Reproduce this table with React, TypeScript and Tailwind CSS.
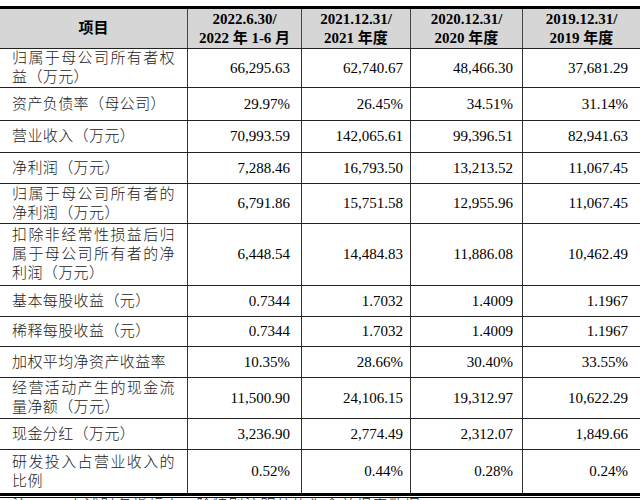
const cols = "grid grid-cols-[188px_114px_109px_112px_117px]";

type Row = { label: string; h: string; v: string[] };

const rows: Row[] = [
  { label: "归属于母公司所有者权益（万元）", h: "h-[39px]", v: ["66,295.63", "62,740.67", "48,466.30", "37,681.29"] },
  { label: "资产负债率（母公司）", h: "h-[33px]", v: ["29.97%", "26.45%", "34.51%", "31.14%"] },
  { label: "营业收入（万元）", h: "h-[32px]", v: ["70,993.59", "142,065.61", "99,396.51", "82,941.63"] },
  { label: "净利润（万元）", h: "h-[31px]", v: ["7,288.46", "16,793.50", "13,213.52", "11,067.45"] },
  { label: "归属于母公司所有者的净利润（万元）", h: "h-[40px]", v: ["6,791.86", "15,751.58", "12,955.96", "11,067.45"] },
  { label: "扣除非经常性损益后归属于母公司所有者的净利润（万元）", h: "h-[62px]", v: ["6,448.54", "14,484.83", "11,886.08", "10,462.49"] },
  { label: "基本每股收益（元）", h: "h-[31px]", v: ["0.7344", "1.7032", "1.4009", "1.1967"] },
  { label: "稀释每股收益（元）", h: "h-[30px]", v: ["0.7344", "1.7032", "1.4009", "1.1967"] },
  { label: "加权平均净资产收益率", h: "h-[31px]", v: ["10.35%", "28.66%", "30.40%", "33.55%"] },
  { label: "经营活动产生的现金流量净额（万元）", h: "h-[41px]", v: ["11,500.90", "24,106.15", "19,312.97", "10,622.29"] },
  { label: "现金分红（万元）", h: "h-[31px]", v: ["3,236.90", "2,774.49", "2,312.07", "1,849.66"] },
  { label: "研发投入占营业收入的比例", h: "h-[43px]", v: ["0.52%", "0.44%", "0.28%", "0.24%"] },
];

const pads = ["pr-[11px]", "pr-[7px]", "pr-[9px]", "pr-[12px]"];

const heads = [
  ["2022.6.30/", "2022 年 1-6 月"],
  ["2021.12.31/", "2021 年度"],
  ["2020.12.31/", "2020 年度"],
  ["2019.12.31/", "2019 年度"],
];

export default function App() {
  return (
    <div className="w-[640px] bg-white pt-[6px] font-['Liberation_Serif','Noto_Sans_CJK_SC',serif] text-[15px] text-black overflow-hidden">
      <div className="border-t-[3px] border-black">
        <div className={`${cols} h-[40px] bg-[#d6d6d6] border-b border-[#222] font-bold leading-[19px]`}>
          <div className="flex items-center justify-center border-r border-[#444]">项目</div>
          {heads.map((h, i) => (
            <div
              key={h[0]}
              className={`flex flex-col items-center justify-center ${i < 3 ? "border-r border-[#444]" : ""}`}
            >
              <span>{h[0]}</span>
              <span>{h[1]}</span>
            </div>
          ))}
        </div>

        {rows.map((r, ri) => (
          <div
            key={r.label}
            className={`${cols} ${r.h} ${ri < rows.length - 1 ? "border-b border-[#222]" : ""}`}
          >
            <div className="flex items-center border-r border-[#333] pl-[12px] pr-[12px]">
              <p className="w-full text-justify leading-[19px] tracking-[0.4px] font-light text-[#222]">
                {r.label}
              </p>
            </div>
            {r.v.map((v, i) => (
              <div
                key={i}
                className={`flex items-center justify-end ${pads[i]} ${i < 3 ? "border-r border-[#333]" : ""}`}
              >
                {v}
              </div>
            ))}
          </div>
        ))}
      </div>

      {/* double rule under the table, note text runs off the page */}
      <div className="h-[3px] bg-black" />
      <div className="mt-[1px] h-px bg-black" />
      <p className="pl-[12px] leading-[15px] font-light text-[#222] tracking-[1px] whitespace-nowrap">
        注：1、上述财务指标中，除特别注明外均为合并报表数据
      </p>
    </div>
  );
}
